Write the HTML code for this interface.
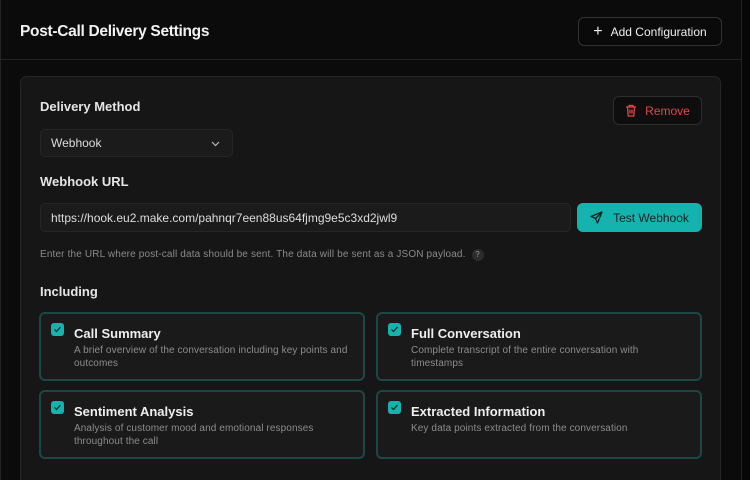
<!DOCTYPE html>
<html style="width:750px;height:480px;overflow:hidden"><head><meta charset="utf-8"><style>
*{box-sizing:border-box;margin:0;padding:0}
body{width:750px;height:480px;background:#070707;font-family:"Liberation Sans",sans-serif;color:#eee;overflow:hidden;position:relative}
.outer{position:absolute;left:0;top:-10px;width:742px;height:490px;background:#0b0b0b;border:1px solid #222;border-bottom:none;border-radius:10px 10px 0 0}
.hdiv{position:absolute;left:0;top:59px;width:742px;height:1px;background:#242424}
.title{position:absolute;left:20px;top:23px;font-size:15.5px;font-weight:bold;color:#f2f2f2;letter-spacing:-0.3px}
.btn{position:absolute;border:1px solid #333;border-radius:6px;background:#0a0a0a;font-size:12px;display:flex;align-items:center;justify-content:center;gap:8px}
.inner{position:absolute;left:20px;top:76px;width:701px;height:420px;background:#161616;border:1px solid #262626;border-radius:7px}
.lbl{position:absolute;font-size:13px;font-weight:bold;color:#e6e6e6}
.field{position:absolute;background:#1b1b1b;border:1px solid #262626;border-radius:5px;font-size:12px;color:#ddd;display:flex;align-items:center;padding-left:10px}
.help{position:absolute;left:40px;top:249px;font-size:10px;letter-spacing:0.15px;color:#8a8a8a}
.q{display:inline-block;width:12px;height:12px;border-radius:6px;background:#2c2c2c;color:#999;font-size:8px;text-align:center;line-height:12px;margin-left:6px}
.card{position:absolute;width:326px;height:69px;background:#1a1a1a;border:2px solid #1d4744;border-radius:6px}
.cb{position:absolute;left:10px;top:9px;width:13px;height:13px;background:#14b3ae;border-radius:3px}
.cb svg{position:absolute;left:2px;top:2px}
.ct{position:absolute;left:33px;top:12px;font-size:13px;font-weight:bold;color:#eee}
.cd{position:absolute;left:33px;top:30px;width:285px;font-size:10px;letter-spacing:0.1px;line-height:13px;color:#8c8c8c}
</style></head><body>
<div class="outer"></div>
<div class="hdiv"></div>
<div class="title">Post-Call Delivery Settings</div>
<div class="btn" style="left:578px;top:17px;width:144px;height:29px;color:#eee"><span style="font-size:16px;font-weight:300">+</span>Add Configuration</div>
<div class="inner"></div>
<div class="lbl" style="left:40px;top:99px">Delivery Method</div>
<div class="btn" style="left:613px;top:96px;width:89px;height:29px;color:#e0474a;border-color:#2e2e2e;background:#0e0e0e">
<svg width="12" height="13" viewBox="0 0 12 13" fill="none" stroke="#e0474a" stroke-width="1.3"><path d="M1 3h10M4 3V1.5h4V3M2.5 3l.7 9h5.6l.7-9M5 5.5v4M7 5.5v4"/></svg>Remove</div>
<div class="field" style="left:40px;top:129px;width:193px;height:28px">Webhook
<svg style="position:absolute;right:12px;top:11px" width="9" height="6" viewBox="0 0 9 6" fill="none" stroke="#bbb" stroke-width="1.2"><path d="M1 1l3.5 3.5L8 1"/></svg></div>
<div class="lbl" style="left:40px;top:174px">Webhook URL</div>
<div class="field" style="left:40px;top:203px;width:531px;height:29px">https://hook.eu2.make.com/pahnqr7een88us64fjmg9e5c3xd2jwl9</div>
<div class="btn" style="left:577px;top:203px;width:125px;height:29px;background:#14b3ae;border-color:#14b3ae;color:#0d2322;gap:10px">
<svg width="13" height="13" viewBox="0 0 13 13" fill="none" stroke="#0d2322" stroke-width="1.3" stroke-linejoin="round"><path d="M12 1L1 5.5l4.5 2 2 4.5z M12 1L5.5 7.5"/></svg>Test Webhook</div>
<div class="help">Enter the URL where post-call data should be sent. The data will be sent as a JSON payload.<span class="q">?</span></div>
<div class="lbl" style="left:40px;top:284px">Including</div>
<div class="card" style="left:39px;top:312px"><div class="cb"><svg width="9" height="9" viewBox="0 0 9 9" fill="none" stroke="#0d2322" stroke-width="1.2"><path d="M1.5 4.5l2 2 4-4.5"/></svg></div><div class="ct">Call Summary</div><div class="cd">A brief overview of the conversation including key points and outcomes</div></div>
<div class="card" style="left:376px;top:312px"><div class="cb"><svg width="9" height="9" viewBox="0 0 9 9" fill="none" stroke="#0d2322" stroke-width="1.2"><path d="M1.5 4.5l2 2 4-4.5"/></svg></div><div class="ct">Full Conversation</div><div class="cd" style="width:245px">Complete transcript of the entire conversation with timestamps</div></div>
<div class="card" style="left:39px;top:390px"><div class="cb"><svg width="9" height="9" viewBox="0 0 9 9" fill="none" stroke="#0d2322" stroke-width="1.2"><path d="M1.5 4.5l2 2 4-4.5"/></svg></div><div class="ct">Sentiment Analysis</div><div class="cd" style="width:250px">Analysis of customer mood and emotional responses throughout the call</div></div>
<div class="card" style="left:376px;top:390px"><div class="cb"><svg width="9" height="9" viewBox="0 0 9 9" fill="none" stroke="#0d2322" stroke-width="1.2"><path d="M1.5 4.5l2 2 4-4.5"/></svg></div><div class="ct">Extracted Information</div><div class="cd">Key data points extracted from the conversation</div></div>
</body></html>
